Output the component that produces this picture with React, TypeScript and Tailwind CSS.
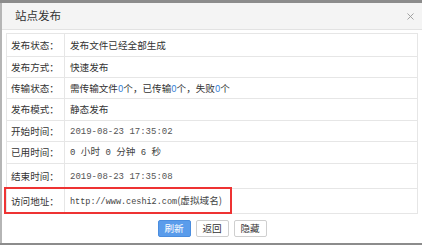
import { X } from 'lucide-react'

const cjk = "font-['Noto_Sans_CJK_SC',sans-serif]"
const mono = "font-['Liberation_Mono','Noto_Sans_CJK_SC',monospace]"

type Row = { label: string; h: string; value: React.ReactNode }

const Zero = () => <span className="text-[#3d86d8]">0</span>

const rows: Row[] = [
  { label: '发布状态：', h: 'h-[23px]', value: '发布文件已经全部生成' },
  { label: '发布方式：', h: 'h-[21px]', value: '快速发布' },
  {
    label: '传输状态：',
    h: 'h-[21px]',
    value: (
      <>
        需传输文件<Zero />个，已传输<Zero />个，失败<Zero />个
      </>
    ),
  },
  { label: '发布模式：', h: 'h-[22px]', value: '静态发布' },
  { label: '开始时间：', h: 'h-[21px]', value: <span className={`${mono} text-[9px] text-[#555]`}>2019-08-23 17:35:02</span> },
  {
    label: '已用时间：',
    h: 'h-[22px]',
    value: (
      <span className="text-[#444]">
        <span className={`${mono} text-[9px] whitespace-pre`}>0 </span>小时<span className={`${mono} text-[9px] whitespace-pre`}> 0 </span>分钟
        <span className={`${mono} text-[9px] whitespace-pre`}> 6 </span>秒
      </span>
    ),
  },
  { label: '结束时间：', h: 'h-[25px]', value: <span className={`${mono} text-[9px] text-[#555]`}>2019-08-23 17:35:08</span> },
  {
    label: '访问地址：',
    h: 'h-[25px]',
    value: (
      <span className="text-[#444]">
        <span className={`${mono} text-[8.5px]`}>http://www.ceshi2.com</span>(虚拟域名)
      </span>
    ),
  },
]

export default function App() {
  return (
    <div className={`relative h-[245px] w-[422px] overflow-hidden bg-[#8c8c8c] pt-[3px] pb-[2px] ${cjk}`}>
      <div className="flex h-full flex-col border-l-2 border-[#b5b5b5] bg-white">
        <div className="flex h-[27px] items-center justify-between border-b border-[#e2e2e2] bg-[#f4f4f4] pl-[13px] pr-[6px]">
          <span className="text-[11.5px] text-[#333]">站点发布</span>
          <X size={11} strokeWidth={2} className="text-[#9a9a9a]" />
        </div>
        <div className="pl-[4px] pt-[3px]">
          <table className="w-[412px] border-collapse border border-[#e6e6e6] text-[9.6px] text-[#333]">
            <tbody>
              {rows.map((r) => (
                <tr key={r.label} className={r.h}>
                  <td className="w-[58px] border border-[#e6e6e6] pl-[4px] whitespace-nowrap">{r.label}</td>
                  <td className="border border-[#e6e6e6] pl-[5px] whitespace-nowrap">{r.value}</td>
                </tr>
              ))}
            </tbody>
          </table>
          <div className="mt-[6px] flex justify-center gap-[5px] pr-[4px] text-[9.6px]">
            <span className="flex h-[17px] w-[33px] items-center justify-center rounded-[2px] border border-[#4a8ddf] bg-[#5a9ceb] text-white">刷新</span>
            <span className="flex h-[17px] w-[33px] items-center justify-center rounded-[2px] border border-[#cfcfcf] bg-white text-[#333]">返回</span>
            <span className="flex h-[17px] w-[33px] items-center justify-center rounded-[2px] border border-[#cfcfcf] bg-white text-[#333]">隐藏</span>
          </div>
        </div>
      </div>
      <div className="absolute left-[4px] top-[187px] h-[27px] w-[228px] border-2 border-[#ee3333]" />
    </div>
  )
}
